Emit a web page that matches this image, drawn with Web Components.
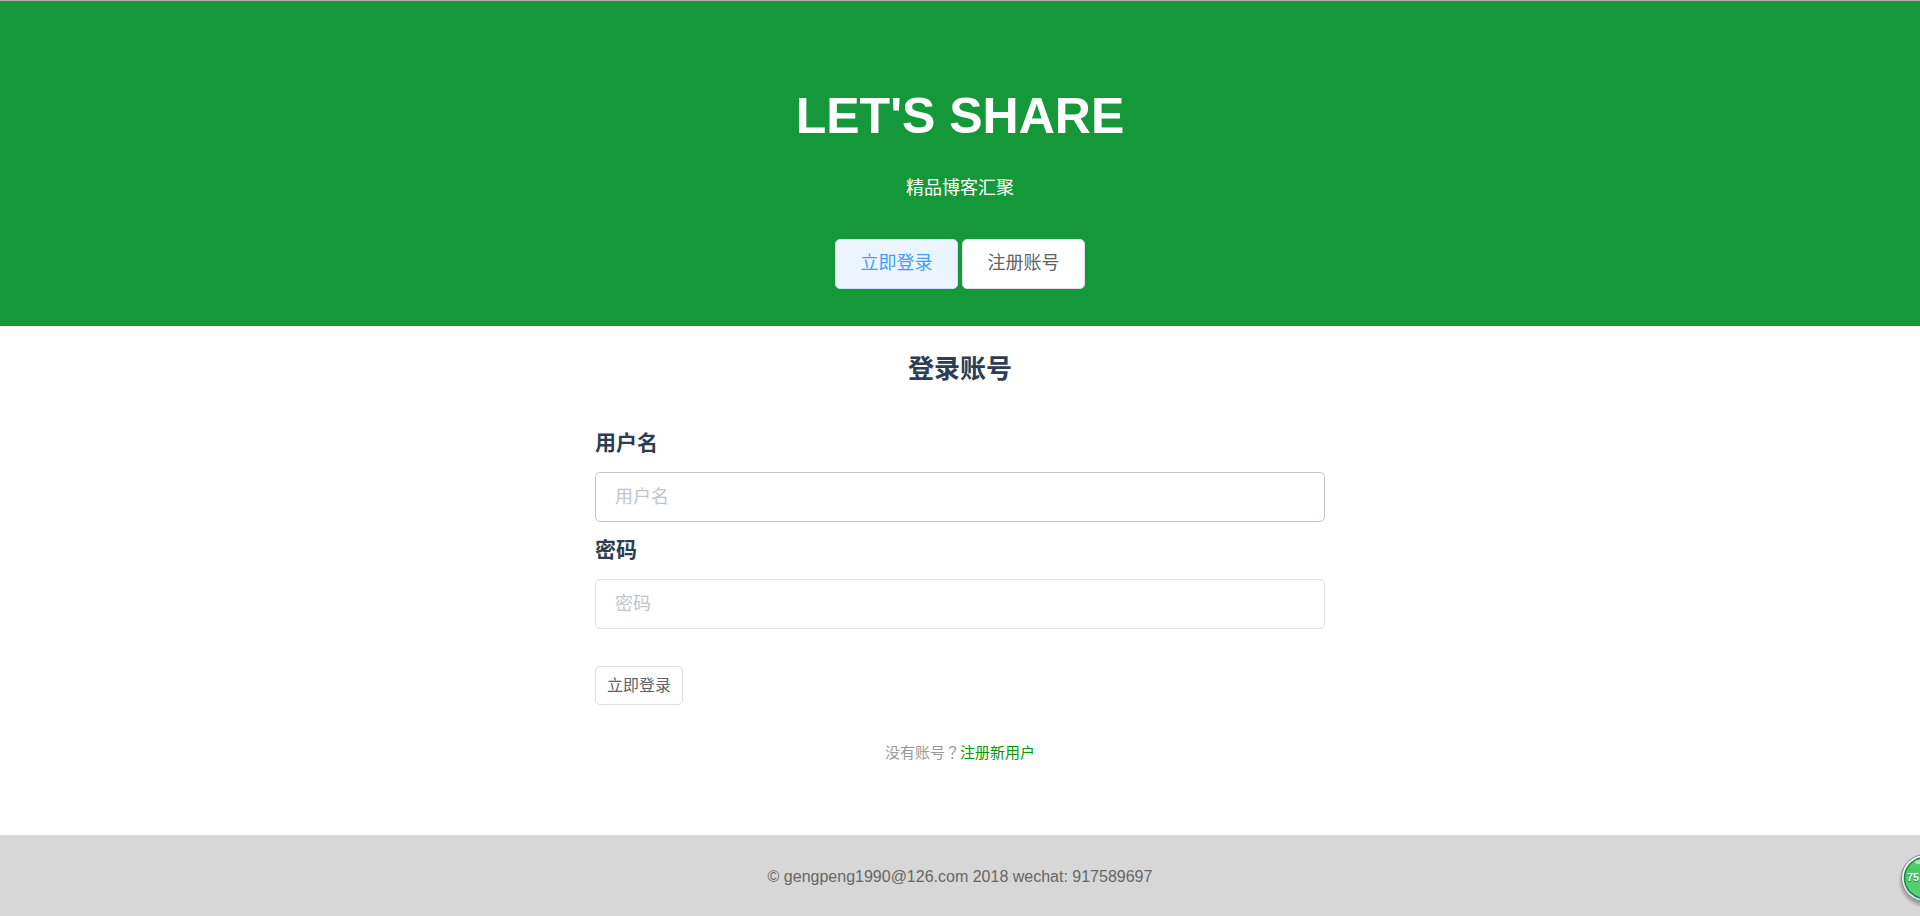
<!DOCTYPE html>
<html lang="zh-CN">
<head>
<meta charset="utf-8">
<title>LET'S SHARE</title>
<style>
html, body { margin: 0; }
body { font-family: "Liberation Sans", "Noto Sans CJK SC", sans-serif; color: #2c3e50; background: #fff; }
</style>
</head>
<body>
<share-app></share-app>
<script>
function define(name, html) {
  const template = document.createElement('template');
  template.innerHTML = html;
  customElements.define(name, class extends HTMLElement {
    constructor() {
      super();
      this.attachShadow({ mode: 'open' }).append(template.content.cloneNode(true));
    }
  });
}

define('share-button', `
<style>
:host { display: inline-block; }
button { display: block; width: 100%; height: var(--button-height, 50px); padding: 0 9px var(--button-drop, 2px); border: 1px solid var(--button-border, #dcdfe6); border-radius: 5px;
  background: var(--button-bg, #fff); color: var(--button-color, #606266);
  font: var(--button-font, 18px)/24px "Liberation Sans", "Noto Sans CJK SC", sans-serif; cursor: pointer; }
</style>
<button type="button"><slot></slot></button>`);

define('share-banner', `
<style>
:host { display: block; box-sizing: border-box; padding: 81px 20px 37px; border-top: 1px solid #b0b0b0; background: #159839; color: #fff; text-align: center; }
h1 { margin: 0; font-size: 50px; line-height: 68px; }
p { margin: 24px 0 0; font-size: 18px; line-height: 28px; }
nav { display: flex; justify-content: center; gap: 4px; margin-top: 37px; }
share-button { width: 123px; }
.active { --button-bg: #ecf5ff; --button-border: #c6e2ff; --button-color: #409eff; }
</style>
<h1>LET'S SHARE</h1>
<p>精品博客汇聚</p>
<nav><share-button class="active">立即登录</share-button><share-button>注册账号</share-button></nav>`);

class ShareField extends HTMLElement {
  connectedCallback() {
    if (this.shadowRoot) return;
    const name = this.getAttribute('label');
    this.attachShadow({ mode: 'open' }).innerHTML = `
<style>
:host { display: block; }
label { display: block; margin-bottom: 14px; font-size: 21px; font-weight: 700; line-height: 30px; }
input { display: block; box-sizing: border-box; width: 100%; height: 50px; padding: 0 19px; border: 1px solid var(--field-border, #dcdfe6); border-radius: 5px;
  background: #fff; color: #606266; font: 18px/24px "Liberation Sans", "Noto Sans CJK SC", sans-serif; outline: none; }
input::placeholder { color: #c0c4cc; opacity: 1; }
</style>
<label for="field">${name}</label>
<input id="field" type="${this.getAttribute('type') || 'text'}" placeholder="${name}">`;
  }
}
customElements.define('share-field', ShareField);

define('login-form', `
<style>
:host { display: block; box-sizing: border-box; max-width: 730px; margin: 0 auto; padding: 24px 0 67px; }
h2 { margin: 0 0 40px; font-size: 26px; line-height: 38px; text-align: center; }
form { display: flex; flex-direction: column; gap: 13px; }
.hover { --field-border: #c0c4cc; }
share-button { width: 88px; margin-top: 24px; align-self: flex-start; --button-height: 39px; --button-font: 16px; --button-drop: 0px; }
p { margin: 36px 0 0; color: #999; font-size: 15px; line-height: 24px; text-align: center; }
.mark { font-family: "Noto Sans CJK TC", sans-serif; line-height: 1; }
a { color: #009a00; text-decoration: none; }
</style>
<h2>登录账号</h2>
<form>
<share-field class="hover" label="用户名"></share-field>
<share-field label="密码" type="password"></share-field>
<share-button>立即登录</share-button>
</form>
<p>没有账号<span class="mark" lang="zh-TW">？</span><a href="#register">注册新用户</a></p>`);

define('share-footer', `
<style>
:host { display: block; box-sizing: border-box; padding: 30px 20px 27px; background: #d7d7d7; color: #666; font-size: 16px; line-height: 24px; text-align: center; }
</style>
<footer>© gengpeng1990@126.com 2018 wechat: 917589697</footer>`);

define('speed-badge', `
<style>
:host { position: fixed; right: 0; bottom: 8px; width: 28px; height: 60px; overflow: hidden; }
svg { display: block; }
text { font: 700 11px "Liberation Sans", sans-serif; text-shadow: 0 1px 1px #24803a; }
</style>
<svg width="60" height="60" viewBox="0 0 60 60">
<defs>
<radialGradient id="shade"><stop offset=".75" stop-color="#000" stop-opacity=".35"/><stop offset="1" stop-color="#000" stop-opacity="0"/></radialGradient>
<linearGradient id="fill" x2="0" y2="1"><stop stop-color="#63d87c"/><stop offset=".3" stop-color="#43cb60"/><stop offset="1" stop-color="#5bd575"/></linearGradient>
<linearGradient id="rim" x2="0" y2="1"><stop stop-color="#fff"/><stop offset="1" stop-color="#dedede"/></linearGradient>
</defs>
<circle cx="33" cy="33" r="27" fill="url(#shade)"/>
<circle cx="33" cy="30" r="23.5" fill="url(#rim)" stroke="#888"/>
<circle cx="33" cy="30" r="20.5" fill="url(#fill)" stroke="#15894a" stroke-width="1.5"/>
<ellipse cx="27" cy="14" rx="4" ry="2" fill="#c9f5d2" opacity=".7"/>
<text x="15" y="33" fill="#fff">75</text>
</svg>`);

define('share-app', `
<style>
:host { display: flex; flex-direction: column; min-height: 100vh; }
main { flex: 1; }
</style>
<share-banner></share-banner>
<main><login-form></login-form></main>
<share-footer></share-footer>
<speed-badge></speed-badge>`);
</script>
</body>
</html>
